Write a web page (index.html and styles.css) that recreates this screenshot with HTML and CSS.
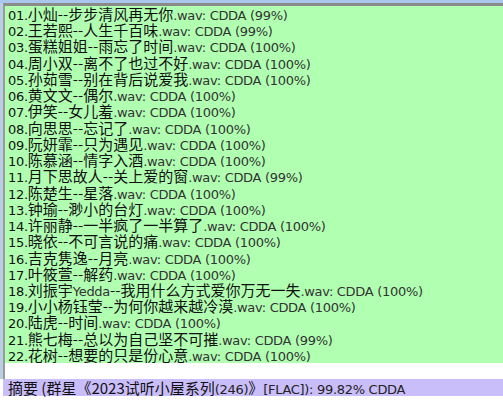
FILE: index.html
```html
<!DOCTYPE html>
<html>
<head>
<meta charset="utf-8">
<link rel="stylesheet" href="styles.css">
</head>
<body>
<div class="top"></div>
<div class="win">
  <div class="side"></div>
  <div class="main">
    <div class="list">
      <div class="row"><span class="n">01.</span><span class="c">小灿--步步清风再无你</span><span class="w">.wav: CDDA (99%)</span></div>
      <div class="row"><span class="n">02.</span><span class="c">王若熙--人生千百味</span><span class="w">.wav: CDDA (99%)</span></div>
      <div class="row"><span class="n">03.</span><span class="c">蛋糕姐姐--雨忘了时间</span><span class="w">.wav: CDDA (100%)</span></div>
      <div class="row"><span class="n">04.</span><span class="c">周小双--离不了也过不好</span><span class="w">.wav: CDDA (100%)</span></div>
      <div class="row"><span class="n">05.</span><span class="c">孙茹雪--别在背后说爱我</span><span class="w">.wav: CDDA (100%)</span></div>
      <div class="row"><span class="n">06.</span><span class="c">黄文文--偶尔</span><span class="w">.wav: CDDA (100%)</span></div>
      <div class="row"><span class="n">07.</span><span class="c">伊笑--女儿羞</span><span class="w">.wav: CDDA (100%)</span></div>
      <div class="row"><span class="n">08.</span><span class="c">向思思--忘记了</span><span class="w">.wav: CDDA (100%)</span></div>
      <div class="row"><span class="n">09.</span><span class="c">阮妍霏--只为遇见</span><span class="w">.wav: CDDA (100%)</span></div>
      <div class="row"><span class="n">10.</span><span class="c">陈慕涵--情字入酒</span><span class="w">.wav: CDDA (100%)</span></div>
      <div class="row"><span class="n">11.</span><span class="c">月下思故人--关上爱的窗</span><span class="w">.wav: CDDA (99%)</span></div>
      <div class="row"><span class="n">12.</span><span class="c">陈楚生--星落</span><span class="w">.wav: CDDA (100%)</span></div>
      <div class="row"><span class="n">13.</span><span class="c">钟瑜--渺小的台灯</span><span class="w">.wav: CDDA (100%)</span></div>
      <div class="row"><span class="n">14.</span><span class="c">许丽静--一半疯了一半算了</span><span class="w">.wav: CDDA (100%)</span></div>
      <div class="row"><span class="n">15.</span><span class="c">晓依--不可言说的痛</span><span class="w">.wav: CDDA (100%)</span></div>
      <div class="row"><span class="n">16.</span><span class="c">吉克隽逸--月亮</span><span class="w">.wav: CDDA (100%)</span></div>
      <div class="row"><span class="n">17.</span><span class="c">叶筱萱--解药</span><span class="w">.wav: CDDA (100%)</span></div>
      <div class="row"><span class="n">18.</span><span class="c">刘振宇</span><span class="y">Yedda</span><span class="c">--我用什么方式爱你万无一失</span><span class="w">.wav: CDDA (100%)</span></div>
      <div class="row"><span class="n">19.</span><span class="c">小小杨钰莹--为何你越来越冷漠</span><span class="w">.wav: CDDA (100%)</span></div>
      <div class="row"><span class="n">20.</span><span class="c">陆虎--时间</span><span class="w">.wav: CDDA (100%)</span></div>
      <div class="row"><span class="n">21.</span><span class="c">熊七梅--总以为自己坚不可摧</span><span class="w">.wav: CDDA (99%)</span></div>
      <div class="row"><span class="n">22.</span><span class="c">花树--想要的只是份心意</span><span class="w">.wav: CDDA (100%)</span></div>
    </div>
    <div class="gap"></div>
  </div>
</div>
<div class="summary"><span class="c">摘要 (群星《2023试听小屋系列</span><span class="s">(246)</span><span class="c">》</span><span class="s">[FLAC]): 99.82% CDDA</span></div>
<div class="foot"></div>
</body>
</html>
```
FILE: styles.css
```css
html, body {
  margin: 0;
  padding: 0;
  background: #ffffff;
  width: 503px;
  height: 400px;
  overflow: hidden;
}
.top {
  height: 3px;
  background: #a9c7ec;
}
.win {
  display: flex;
  height: 376px;
}
.side {
  width: 3px;
  background: #b9cde4;
}
.main {
  flex: 1;
  border-top: 3px solid #8a8a8a;
  border-left: 2px solid #9a9a9a;
  display: flex;
  flex-direction: column;
}
.list {
  background: #b1ffb1;
  padding: 0 0 0 3px;
  height: 357px;
  box-sizing: border-box;
}
.gap {
  flex: 1;
  background: #ffffff;
}
.row {
  display: flex;
  align-items: baseline;
  box-sizing: border-box;
  height: 16.24px;
  padding-top: 1px;
  white-space: nowrap;
}
.row span {
  line-height: 14px;
}
.n, .w, .y, .s {
  font-family: "DejaVu Sans", sans-serif;
  font-size: 13px;
  letter-spacing: -0.3px;
}
.n {
  color: #111111;
}
.w, .y {
  color: #333333;
}
.c {
  font-family: "Noto Sans CJK SC", sans-serif;
  font-size: 15px;
  color: #111111;
}
.summary {
  margin-left: 3px;
  height: 17px;
  box-sizing: border-box;
  padding: 1px 0 0 5px;
  display: flex;
  align-items: baseline;
  background: #c9bdfa;
  white-space: nowrap;
}
.summary span {
  line-height: 15px;
}
.s {
  color: #222222;
}
.foot {
  height: 4px;
}
```
